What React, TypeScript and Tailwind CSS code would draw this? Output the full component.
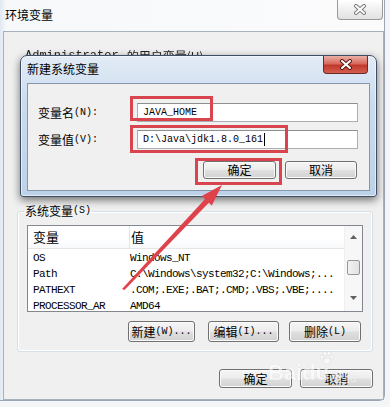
import React from 'react';

const MONO = 'font-[family-name:Liberation_Mono,Noto_Sans_CJK_SC,monospace]';
const CJK = 'font-[family-name:Noto_Sans_CJK_SC,sans-serif]';

// Chinese part at 12px, ASCII part half width like SimSun
const Lbl: React.FC<{ zh: string; en?: string; className?: string }> = ({ zh, en, className }) => (
  <span className={`flex items-center whitespace-nowrap leading-[14px] text-black ${className ?? ''}`}>
    <span className={`${CJK} text-[12px]`}>{zh}</span>
    {en && <span className={`${MONO} text-[10px]`}>{en}</span>}
  </span>
);

const WinBtn: React.FC<{ children: React.ReactNode; className?: string }> = ({ children, className }) => (
  <div
    className={`flex items-center justify-center rounded-[3px] border border-[#707070] bg-[linear-gradient(#f6f6f6_0%,#ececec_48%,#dfdfdf_52%,#d2d2d2_100%)] shadow-[inset_0_0_0_1px_#fbfbfb] ${className ?? ''}`}
  >
    {children}
  </div>
);

const CloseX: React.FC<{ dark?: boolean }> = ({ dark }) => (
  <svg width="14" height="11" viewBox="0 0 14 11">
    <path d="M3 2 L11 9 M11 2 L3 9" stroke={dark ? '#5a1a14' : '#7d7d7d'} strokeWidth="4" strokeLinecap="round" />
    <path d="M3 2 L11 9 M11 2 L3 9" stroke="#ffffff" strokeWidth="2" strokeLinecap="round" />
  </svg>
);

const rows = [
  ['OS', 'Windows_NT'],
  ['Path', 'C:\\Windows\\system32;C:\\Windows;...'],
  ['PATHEXT', '.COM;.EXE;.BAT;.CMD;.VBS;.VBE;....'],
  ['PROCESSOR_AR', 'AMD64'],
];

const App: React.FC = () => {
  return (
    <div className="relative h-[407px] w-[390px] overflow-hidden bg-[#f3f5f7]">
      {/* 环境变量 window */}
      <div className="flex h-[401px] w-[385px] flex-col rounded-br-[6px] border-r border-b border-[#9aa6b3] bg-[linear-gradient(90deg,#dfe8f1_0px,#f6f8fa_6px,#fbfbfc_100%)]">
        <div className="flex h-[31px] items-start">
          <span className={`${CJK} pl-[5px] pt-[7px] text-[12px] leading-[16px] text-black`}>环境变量</span>
          <div className="mr-[1px] ml-auto flex h-[20px] w-[46px] items-center justify-center rounded-b-[4px] border border-t-0 border-[#9a9a9a] bg-[linear-gradient(#ffffff_0%,#f0f0f0_50%,#e2e2e2_100%)]">
            <CloseX />
          </div>
        </div>

        <div className="ml-[3px] flex h-[369px] w-[381px] flex-col border border-[#a7b1bc] bg-[#f0f0f0]">
          <div className={`${CJK} mt-[17px] ml-[21px] flex gap-[8px] text-[12px] leading-[14px] text-[#222] blur-[0.5px]`}>
            <span className={MONO}>Administrator</span>
            <span>的用户变量(U)</span>
          </div>

          <fieldset className="mt-[141px] mr-[10px] ml-[13px] rounded-[3px] border border-[#d5dfe5] px-[9px] pt-[7px] pb-[9px] shadow-[inset_0_0_0_1px_#ffffff]">
            <legend className="-ml-[3px] px-[1px]">
              <Lbl zh="系统变量" en="(S)" className="text-[#222]" />
            </legend>

            <div className="flex h-[87px] overflow-hidden border border-[#828790] bg-white">
              <div className="flex flex-1 flex-col">
                <div className="flex h-[23px] shrink-0 items-center border-b border-[#e5e5e5] bg-[linear-gradient(#ffffff_0%,#ffffff_60%,#f7f8fa_100%)]">
                  <span className={`${CJK} flex h-full w-[102px] items-center border-r border-[#e5e5e5] pl-[5px] text-[13px] text-black`}>变量</span>
                  <span className={`${CJK} pl-[1px] text-[13px] text-black`}>值</span>
                </div>
                <div className="pt-[1px]">
                  {rows.map(([k, v]) => (
                    <div key={k} className={`${MONO} flex h-[16px] items-center text-[11px] tracking-[-0.6px] text-black`}>
                      <span className="w-[102px] pl-[5px]">{k}</span>
                      <span className="whitespace-nowrap">{v}</span>
                    </div>
                  ))}
                </div>
              </div>
              <div className="flex w-[18px] flex-col items-center border-l border-[#f0f0f0] bg-[#f7f7f7]">
                <svg className="mt-[9px]" width="7" height="4" viewBox="0 0 7 4">
                  <path d="M0 4 L3.5 0 L7 4 Z" fill="#606060" />
                </svg>
                <div className="mt-[21px] h-[15px] w-[13px] rounded-[2px] border border-[#979797] bg-[linear-gradient(90deg,#f2f2f2,#e2e2e2)]" />
                <svg className="mt-[21px]" width="7" height="4" viewBox="0 0 7 4">
                  <path d="M0 0 L7 0 L3.5 4 Z" fill="#606060" />
                </svg>
              </div>
            </div>

            <div className="mt-[9px] flex justify-end pr-[2px]">
              <WinBtn className="h-[21px] w-[67px]"><Lbl zh="新建" en="(W)..." /></WinBtn>
              <WinBtn className="ml-[13px] h-[21px] w-[71px]"><Lbl zh="编辑" en="(I)..." /></WinBtn>
              <WinBtn className="ml-[10px] h-[21px] w-[72px]"><Lbl zh="删除" en="(L)" /></WinBtn>
            </div>
          </fieldset>

          <div className="mt-[17px] flex justify-end pr-[10px]">
            <WinBtn className="h-[19px] w-[73px]"><Lbl zh="确定" /></WinBtn>
            <WinBtn className="ml-[8px] h-[19px] w-[73px]"><Lbl zh="取消" /></WinBtn>
          </div>
        </div>
      </div>

      {/* 新建系统变量 dialog on top */}
      <div className="absolute top-[55px] left-[20px] flex h-[142px] w-[357px] flex-col rounded-t-[7px] rounded-b-[3px] border border-[#3f4f63] bg-[linear-gradient(180deg,#e3ecf6_0%,#cadbee_35%,#bdd2e8_100%)] shadow-[0_3px_9px_rgba(0,0,0,0.55),inset_0_0_0_1px_rgba(255,255,255,0.55)]">
        <div className="flex h-[27px] items-start">
          <span className={`${CJK} pl-[6px] pt-[5px] text-[12px] leading-[16px] text-black`}>新建系统变量</span>
          <div className="mr-[8px] ml-auto flex h-[18px] w-[45px] items-center justify-center rounded-b-[4px] border border-t-0 border-[#6b2a24] bg-[linear-gradient(#eab0a6_0%,#d8695d_45%,#c2382c_55%,#d45e50_100%)]">
            <CloseX dark />
          </div>
        </div>
        <div className="mx-[6px] flex h-[108px] flex-col border border-[#8597ad] bg-[#f0f0f0]">
          <div className="mt-[19px] flex items-center">
            <Lbl zh="变量名" en="(N):" className="w-[109px] pl-[10px]" />
            <div className={`${MONO} flex h-[19px] w-[221px] items-center border border-[#abadb3] border-t-[#8e8f8f] bg-white pl-[5px] text-[10px] text-black`}>
              JAVA_HOME
            </div>
          </div>
          <div className="mt-[8px] flex items-center">
            <Lbl zh="变量值" en="(V):" className="w-[109px] pl-[10px]" />
            <div className={`${MONO} flex h-[19px] w-[221px] items-center border border-[#abadb3] border-t-[#8e8f8f] bg-white pl-[5px] text-[10px] text-black`}>
              <span>D:\Java\jdk1.8.0_161</span>
              <span className="ml-[1px] h-[13px] w-[1px] bg-black" />
            </div>
          </div>
          <div className="mt-[12px] flex justify-end pr-[12px]">
            <WinBtn className="h-[18px] w-[73px]"><Lbl zh="确定" /></WinBtn>
            <WinBtn className="ml-[9px] h-[18px] w-[72px]"><Lbl zh="取消" /></WinBtn>
          </div>
        </div>
      </div>

      {/* red annotation boxes */}
      <div className="absolute top-[96px] left-[130px] h-[25px] w-[83px] border-[3px] border-[#d8454f]" />
      <div className="absolute top-[125px] left-[130px] h-[28px] w-[158px] border-[3px] border-[#d8454f]" />
      <div className="absolute top-[158px] left-[195px] h-[27px] w-[87px] border-[3px] border-[#d8454f]" />

      {/* red arrow */}
      <svg className="pointer-events-none absolute top-0 left-0" width="390" height="407" viewBox="0 0 390 407">
        <polygon points="122,289 124.5,290 210,201.5 206,198" fill="#e0424c" />
        <polygon points="222,185 201.8,196 211.8,205.6" fill="#e0424c" />
      </svg>

      {/* watermark */}
      <div className="pointer-events-none absolute top-[351px] left-[268px] flex flex-col items-center opacity-60">
        <svg width="16" height="14" viewBox="0 0 16 14" className="ml-[28px]">
          <g fill="#ffffff" stroke="#d0d0d0" strokeWidth="0.6">
            <circle cx="3" cy="6" r="2" />
            <circle cx="6" cy="2.5" r="2" />
            <circle cx="10" cy="2.5" r="2" />
            <circle cx="13" cy="6" r="2" />
            <ellipse cx="8" cy="10" rx="3.5" ry="3" />
          </g>
        </svg>
        <div className="-mt-[3px] flex items-end">
          <span className="font-['Liberation_Sans',sans-serif] text-[22px] leading-[22px] font-bold text-white [text-shadow:0_0_1px_#bdbdbd]">Bai</span>
          <span className="font-['Liberation_Sans',sans-serif] text-[22px] leading-[22px] font-bold text-white [text-shadow:0_0_1px_#bdbdbd]">du</span>
          <span className={`${CJK} ml-[2px] text-[13px] leading-[16px] text-white [text-shadow:0_0_1px_#bdbdbd]`}>经验</span>
        </div>
      </div>
    </div>
  );
};

export default App;
